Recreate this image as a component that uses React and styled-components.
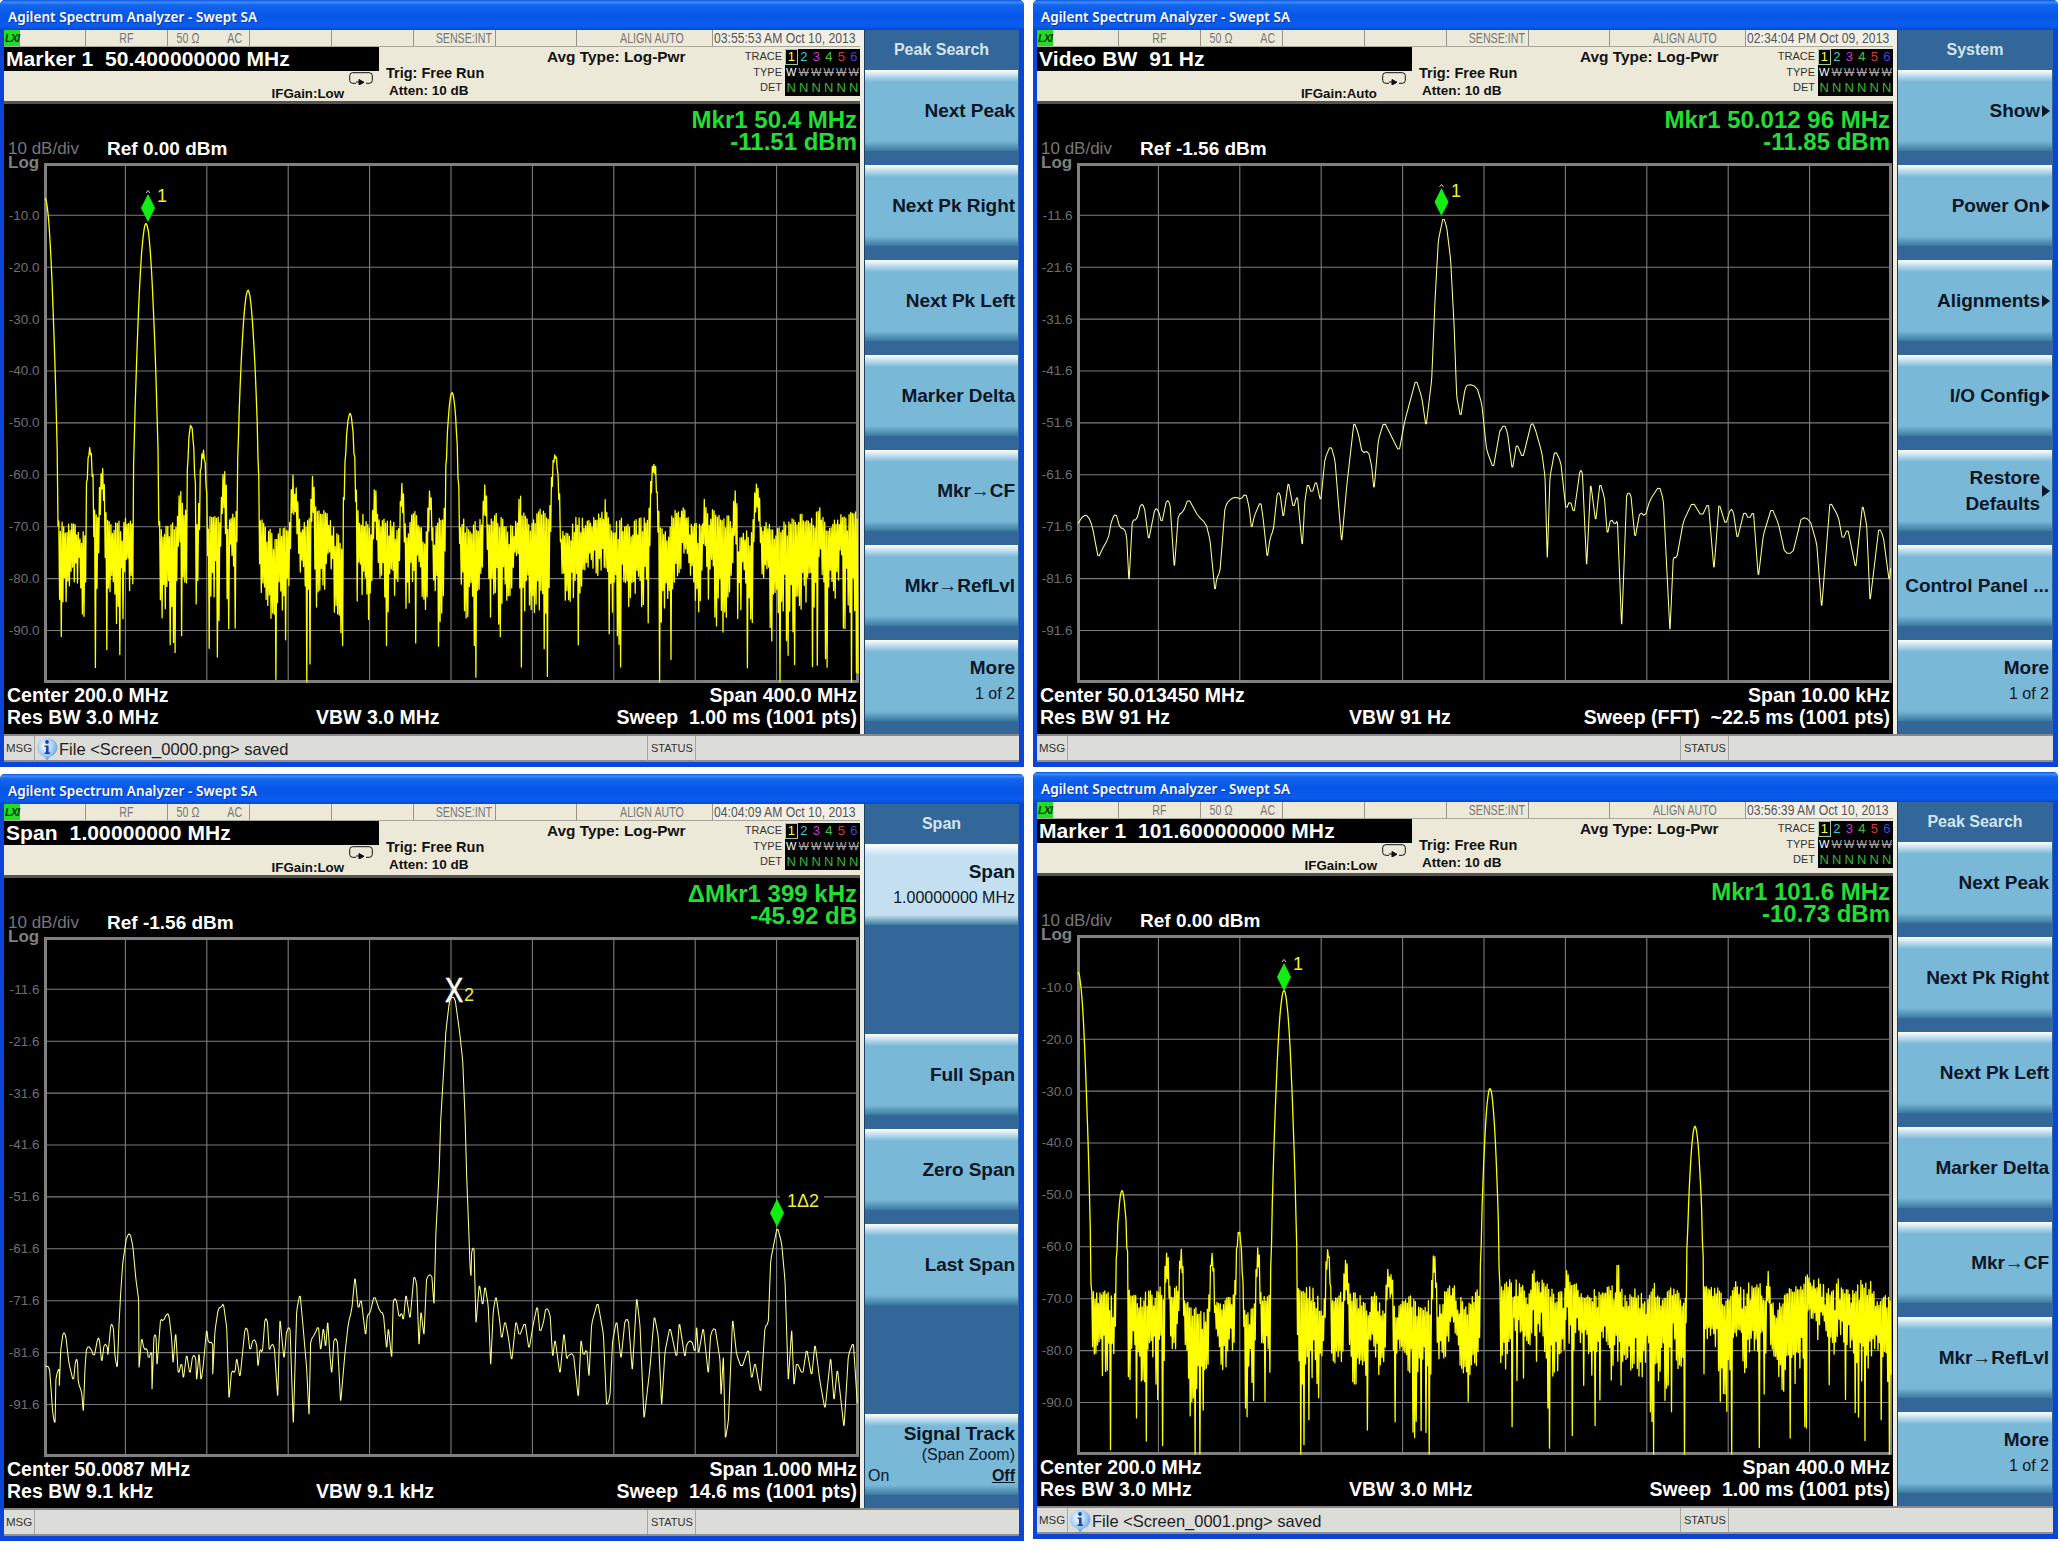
import React from "react";
import styled, { createGlobalStyle } from "styled-components";

const SANS = `"Liberation Sans", Arial, sans-serif`;

const Global = createGlobalStyle`
  html, body { margin: 0; padding: 0; background: #fff; }
  body { font-family: ${SANS}; }
`;

/* ---------- page ---------- */
const Page = styled.div`
  display: grid;
  grid-template-columns: 1024px 1025px;
  column-gap: 9px;
  row-gap: 7px;
  width: 2060px;
  height: 1550px;
  overflow: hidden;
  align-content: start;
  background: #fff;
`;
const Window = styled.section`
  height: 767px;
  margin-top: ${(p) => p.$drop || 0}px;
  background: #0a45d8;
  border-radius: 5px 5px 0 0;
  display: flex;
  flex-direction: column;
  overflow: hidden;
`;
const TitleBar = styled.header`
  height: 30px;
  flex: none;
  box-sizing: border-box;
  display: flex;
  align-items: center;
  padding: 4px 0 0 8px;
  background: linear-gradient(#0a52e0 0, #3d8cf6 2px, #1366ee 5px, #0555e6 16px, #0a5cf0 26px, #0746cc 30px);
  color: #fff;
  font-family: "Noto Sans", sans-serif;
  font-size: 13.5px;
  font-weight: 600;
  letter-spacing: 0.07px;
  text-shadow: 1px 1px 0 #0a3aa8;
`;
const Body = styled.div`
  height: 704px;
  flex: none;
  margin: 0 5px 0 4px;
  display: flex;
`;
const Main = styled.div`
  width: 856px;
  flex: none;
  border-right: 4px solid #f0eee2;
  display: flex;
  flex-direction: column;
`;

/* ---------- settings strip ---------- */
const Strip = styled.div`
  height: 17px;
  flex: none;
  display: grid;
  grid-template-columns: 82px 82px 82px 82px 82px 82px 81px 136px 1fr;
  background: #ece9d8;
  border-bottom: 1px solid #aaa89a;
  box-sizing: border-box;
  color: #777;
  font-size: 14px;
  line-height: 16px;
`;
const StripCell = styled.div`
  border-right: 1px solid #97958a;
  display: flex;
  align-items: center;
  justify-content: ${(p) => p.$align || "center"};
  gap: 22px;
  padding: 0 ${(p) => p.$inset || 0}px 0 0;
  overflow: visible;
  white-space: nowrap;
  &:last-child { border-right: none; background: #f2f0e6; justify-content: flex-start; padding-left: 1px; color: #555; }
`;
const Condensed = styled.span`
  display: inline-block;
  transform: scaleX(${(p) => p.$scale || 0.76});
  transform-origin: ${(p) => p.$origin || "center"};
`;
const LxiBadge = styled.span`
  align-self: stretch;
  width: 16px;
  margin-right: auto;
  background: #22dd22;
  color: #0a3a0a;
  font-size: 11px;
  font-weight: 700;
  font-style: italic;
  letter-spacing: -1px;
  text-align: center;
`;

/* ---------- header ---------- */
const Header = styled.div`
  height: 57px;
  flex: none;
  box-sizing: border-box;
  display: flex;
  background: #ece9d8;
  border-bottom: 3px solid #55544e;
`;
const ReadoutBlock = styled.div`
  width: 375px;
  flex: none;
  display: flex;
  flex-direction: column;
`;
const Readout = styled.div`
  height: 24px;
  flex: none;
  padding-left: 2px;
  background: #000;
  color: #fff;
  font-size: 21px;
  font-weight: 700;
  line-height: 24px;
  letter-spacing: 0.1px;
  white-space: pre;
`;
const GainRow = styled.div`
  display: flex;
  justify-content: flex-end;
  gap: 5px;
  padding: 1px 6px 0 0;
`;
const GainText = styled.span`
  margin-top: 14px;
  font-size: 13.3px;
  font-weight: 700;
  line-height: 16px;
  color: #111;
`;
const TrigBlock = styled.div`
  width: 168px;
  flex: none;
  box-sizing: border-box;
  padding: 17px 0 0 7px;
  font-size: 14.5px;
  font-weight: 700;
  line-height: 18px;
  color: #111;
`;
const AttenLine = styled.div`
  padding-left: 3px;
  font-size: 13.5px;
`;
const AvgBlock = styled.div`
  padding-top: 1px;
  font-size: 15.4px;
  font-weight: 700;
  line-height: 18px;
  color: #111;
  white-space: nowrap;
`;
const TraceBlock = styled.div`
  margin-left: auto;
  display: flex;
  gap: 3px;
  padding-top: 2px;
`;
const TraceLabels = styled.div`
  display: flex;
  flex-direction: column;
  align-items: flex-end;
  font-size: 11px;
  line-height: 15.5px;
  color: #333;
`;
const TraceBox = styled.div`
  width: 75px;
  height: 47px;
  background: #000;
  display: grid;
  grid-template-columns: repeat(6, 1fr);
  grid-auto-rows: 15.6px;
  font-size: 13px;
  line-height: 15.6px;
  text-align: center;
`;
const TraceNum = styled.span`
  color: ${(p) => p.$color};
  ${(p) => p.$active && "outline: 1px solid #9c9; outline-offset: -1px; color: #ff5;"}
`;
const TraceType = styled.span`
  color: ${(p) => (p.$active ? "#fff" : "#aaa")};
  font-size: 11px;
  text-decoration: ${(p) => (p.$active ? "none" : "line-through")};
`;
const TraceDet = styled.span`
  color: #33bb33;
`;

/* ---------- display ---------- */
const Display = styled.div`
  flex: 1;
  background: #000;
  display: flex;
  flex-direction: column;
  color: #fff;
`;
const DisplayTop = styled.div`
  height: 59px;
  flex: none;
  display: grid;
  grid-template-columns: 103px 1fr auto;
  align-items: start;
  padding-right: 3px;
`;
const ScaleText = styled.div`
  padding: 35px 0 0 4px;
  color: #777;
  font-size: 17px;
  line-height: 20px;
  white-space: nowrap;
`;
const RefText = styled.div`
  padding-top: 34px;
  font-size: 19px;
  font-weight: 700;
  line-height: 22px;
  white-space: pre;
`;
const MarkerText = styled.div`
  padding-top: 5px;
  text-align: right;
  color: #22dd33;
  font-size: 24px;
  font-weight: 700;
  line-height: 22px;
`;
const Chart = styled.svg`
  display: block;
  flex: none;
  width: 856px;
  height: 521px;
  overflow: visible;
`;
const AxisLabel = styled.text`
  fill: #6f6f6f;
  font-family: ${SANS};
  font-size: 13.5px;
  text-anchor: end;
`;
const LogLabel = styled.text`
  fill: #808080;
  font-family: ${SANS};
  font-size: 17px;
  font-weight: 700;
`;
const MarkerNum = styled.text`
  fill: #eeee33;
  font-family: ${SANS};
  font-size: 18px;
`;
const DeltaX = styled.text`
  fill: #fff;
  font-family: ${SANS};
  font-size: 36px;
  stroke: #fff;
  stroke-width: 0.6px;
`;
const Foot = styled.div`
  flex: 1;
  display: grid;
  grid-template-columns: 309px 1fr auto;
  grid-auto-rows: 22px;
  padding: 0 3px;
  font-size: 19.5px;
  font-weight: 700;
  line-height: 22px;
  white-space: pre;
`;
const FootRight = styled.div`
  text-align: right;
`;

/* ---------- soft keys ---------- */
const Keys = styled.aside`
  flex: 1;
  display: flex;
  flex-direction: column;
  gap: 14px;
  background: #336699;
  padding-right: 1px;
  border-left: 1px solid #1f3f5f;
`;
const KeysTitle = styled.div`
  height: 40px;
  margin-bottom: -14px;
  flex: none;
  text-align: center;
  color: #d3e6f0;
  font-size: 16px;
  font-weight: 700;
  line-height: 40px;
`;
const Key = styled.div`
  height: 81px;
  flex: none;
  box-sizing: border-box;
  display: flex;
  align-items: center;
  justify-content: flex-end;
  gap: 2px;
  padding-right: 3px;
  text-align: right;
  color: #0b1626;
  background: linear-gradient(
    #ffffff 0,
    ${(p) => (p.$selected ? "#c4e0f0" : "#7ab8d8")} 12px,
    ${(p) => (p.$selected ? "#c4e0f0" : "#7ab8d8")} calc(100% - 10px),
    #3a7aa0 100%
  );
`;
const KeyEmpty = styled.div`
  height: 81px;
  flex: none;
`;
const KeyText = styled.div`
  flex: 1;
  min-width: 0;
`;
const KeyLabel = styled.div`
  font-size: 19px;
  font-weight: 700;
  line-height: ${(p) => (p.$tight ? 21 : 26)}px;
  white-space: pre-line;
  letter-spacing: -0.05px;
`;
const KeySub = styled.div`
  font-size: 16px;
  line-height: ${(p) => (p.$tight ? 21 : 26)}px;
  white-space: nowrap;
`;
const KeyToggle = styled.div`
  display: flex;
  justify-content: space-between;
  padding-left: 3px;
  font-size: 16px;
  line-height: 21px;
`;
const KeyOff = styled.span`
  text-decoration: underline;
  font-weight: 700;
`;
const Arrow = styled.span`
  flex: none;
  width: 0;
  height: 0;
  margin-right: -1px;
  border-top: 6px solid transparent;
  border-bottom: 6px solid transparent;
  border-left: 8px solid #0b1626;
`;

/* ---------- status bar ---------- */
const StatusBar = styled.footer`
  height: 28px;
  flex: none;
  margin: 0 5px 0 4px;
  box-sizing: border-box;
  display: grid;
  grid-template-columns: 31px 613px 48px 1fr;
  background: #dcdcd8;
  border-top: 2px solid #888;
  border-bottom: 2px solid #8f8f8f;
  color: #222;
  line-height: 24px;
`;
const BarTag = styled.div`
  font-size: 11.5px;
  padding-left: 2px;
  border-right: 1px solid #a5a5a0;
  color: #333;
`;
const BarMsg = styled.div`
  display: flex;
  align-items: center;
  gap: 1px;
  padding: 1px 0 0 1px;
  font-size: 16.5px;
  border-right: 1px solid #a5a5a0;
  white-space: nowrap;
`;
const StatusTag = styled(BarTag)`
  padding-left: 3px;
  font-size: 11px;
`;

/* ---------- data ---------- */
const rngFrom = (seed) => () => {
  seed |= 0;
  seed = (seed + 0x6d2b79f5) | 0;
  let t = Math.imul(seed ^ (seed >>> 15), 1 | seed);
  t = (t + Math.imul(t ^ (t >>> 7), 61 | t)) ^ t;
  return ((t ^ (t >>> 14)) >>> 0) / 4294967296;
};

/* sweep of 1001 points: every other point sits at the noise crest, the others deep in it,
   so the band reads as a solid block with jagged edges, thinning out on strong tones */
const noiseTrace = (seed, tones, floorAt, depth) => {
  const r = rngFrom(seed);
  const grid = Array.from({ length: 240 }, () => r());
  const smooth = (x) => {
    const g = x / 9;
    const i = Math.floor(g);
    const f = g - i;
    return grid[i % 240] * (1 - f) + grid[(i + 1) % 240] * f;
  };
  const pts = [];
  for (let i = 0; i <= 1000; i++) {
    const x = i * 0.813;
    let t = 1e4;
    for (const [px, py, w = 7.3] of tones) {
      const d = (x - px) / w;
      t = Math.min(t, py + 100 * d * d);
    }
    const top = floorAt(x) + (smooth(x) - 0.5) * 30;
    const reach = depth * (0.6 + 0.85 * smooth(x * 1.7 + 500));
    let d;
    if (i % 2) {
      d = 24 * r() * r();
    } else {
      d = reach * (0.55 + 0.45 * r());
      if (r() < 0.16) d += 25 + r() * 75;
    }
    let y;
    if (t < top) {
      const s = (top - t) / 46;
      y = t + d * Math.exp(-s * s) + r() * 0.8;
    } else {
      y = top + d;
    }
    pts.push(`${x.toFixed(1)},${Math.min(y, 518).toFixed(1)}`);
  }
  return pts.join(" ");
};

/* soft corners on the hand-read traces: only the last few pixels of each corner are cut */
const rounded = (list) => {
  const out = [list[0]];
  for (let i = 1; i < list.length - 1; i++) {
    const [px, py] = list[i - 1];
    const [x, y] = list[i];
    const [nx, ny] = list[i + 1];
    const la = Math.hypot(px - x, py - y) || 1;
    const lb = Math.hypot(nx - x, ny - y) || 1;
    const ca = Math.min(la * 0.3, 3) / la;
    const cb = Math.min(lb * 0.3, 3) / lb;
    out.push([x + (px - x) * ca, y + (py - y) * ca]);
    out.push([x + (nx - x) * cb, y + (ny - y) * cb]);
  }
  out.push(list[list.length - 1]);
  return out;
};
const zoomed = (list, ox, oy) => list.map(([x, y]) => [ox + x / 3, oy + y / 3]);
const toPoints = (list) => rounded(list).map(([x, y]) => `${x.toFixed(1)},${y.toFixed(1)}`).join(" ");

const TONES_A = [
  [0, 34, 7.7], [101, 59, 8], [203, 126, 8], [45, 283, 6], [57, 303, 6], [146, 260, 6], [158, 284, 6], [179, 306, 6], [135, 316, 5],
  [305, 249], [407, 228], [510, 289], [609, 296], [712, 317], [357, 319, 5], [248, 311, 5], [268, 309, 5],
  [251, 316, 5], [330, 322, 5], [440, 320, 5], [385, 325, 5], [475, 330, 5], [560, 335, 5], [660, 332, 5], [690, 325, 5],
];
const TONES_D = [
  [0, 36, 7.7], [206, 54, 8], [412, 152], [617, 190], [44, 254], [89, 312, 5], [103, 312, 5], [134, 316, 5], [161, 294, 6],
  [180, 311, 5], [250, 307, 5], [268, 316, 5], [313, 332, 5], [356, 317, 5], [455, 324, 5], [489, 332, 5], [310, 330, 5],
  [540, 325, 5], [690, 332, 5], [760, 335, 5],
];

const W2A = [[145,970],[160,945],[175,948],[187,980],[205,1075],[215,1050],[235,1015],[245,960],[257,938],[270,985],[283,985],[290,1010],[297,1145],[307,960],[320,960],[333,910],[343,920],[356,1022],[375,925],[385,930],[395,970],[410,898],[420,910],[433,1105],[445,945],[460,935],[475,895],[505,950],[528,970],[540,1020],[555,1175],[560,1135],[570,1115],[585,920],[600,897],[620,890],[632,900],[647,878],[657,920],[665,988],[672,950],[692,903],[700,960],[712,1075],[720,1015],[730,990],[742,878],[750,880],[760,955],[775,845],[790,925],[802,885],[817,1040],[825,900],[833,848],[846,882],[858,840],[872,905],[885,775],[902,735],[915,780],[935,1028],[950,860],[972,665],[985,700],[997,760],[1015,752],[1025,800],[1032,870],[1045,720],[1062,665],[1085,710],[1107,755],[1125,660],[1158,538],[1175,590],[1188,680],[1205,540],[1215,300],[1225,120],[1240,50],[1250,80],[1262,180],[1272,370],[1280,590],[1292,652],[1305,565],[1315,552],[1340,560],[1355,610],[1370,750],[1390,805],[1410,690]];
const W2B = [[0,275],[12,252],[22,275],[37,390],[50,310],[68,355],[95,245],[105,265],[125,335],[135,410],[142,660],[150,410],[165,330],[182,365],[198,510],[210,480],[222,520],[240,390],[247,395],[260,680],[272,430],[287,545],[300,428],[313,470],[322,585],[332,535],[345,555],[352,540],[365,860],[380,460],[392,460],[405,595],[420,515],[435,530],[450,480],[478,437],[490,480],[510,875],[520,650],[530,655],[550,545],[578,485],[605,530],[625,488],[642,690],[657,490],[677,555],[692,505],[700,515],[712,598],[733,512],[747,540],[760,512],[775,712],[790,585],[815,503],[835,550],[855,640],[878,640],[905,530],[930,540],[950,610],[965,805],[990,485],[1015,530],[1028,600],[1043,565],[1067,685],[1088,493],[1100,555],[1110,785],[1137,562],[1150,590],[1168,725],[1172,685]];
const W3A = [[45,708],[58,710],[65,800],[68,850],[75,885],[78,740],[88,710],[88,775],[92,660],[100,605],[107,615],[117,700],[130,755],[137,690],[142,688],[145,760],[155,785],[160,850],[165,715],[170,650],[182,652],[192,683],[203,625],[208,625],[215,700],[223,640],[233,650],[233,682],[243,580],[250,590],[255,680],[262,718],[266,605],[272,490],[278,400],[290,320],[300,308],[308,345],[318,450],[326,510],[327,720],[335,620],[342,660],[352,655],[355,690],[365,660],[366,785],[372,615],[378,615],[381,710],[392,565],[400,575],[410,550],[417,555],[425,625],[429,705],[437,605],[445,735],[455,695],[460,750],[470,670],[480,735],[488,675],[497,680],[500,755],[507,665],[513,755],[520,705],[530,595],[535,640],[548,635],[548,740],[555,600],[565,535],[575,530],[580,520],[590,590],[597,810],[605,720],[615,730],[620,680],[630,745],[645,595],[652,595],[660,665],[670,625],[680,640],[684,715],[690,655],[697,670],[705,565],[712,570],[718,665],[725,640],[733,650],[743,805],[750,565],[762,690],[770,600],[780,590],[790,885],[800,540],[810,490],[820,600],[830,715],[837,860],[842,630],[855,612],[865,585],[872,665],[880,590],[887,655],[893,570],[900,680],[905,735],[912,625],[922,630],[932,820],[945,670],[955,580],[965,540],[975,438],[985,540],[993,505],[1007,620],[1012,555],[1020,550],[1033,495],[1050,545],[1060,550],[1070,660],[1075,590],[1085,688],[1090,510],[1098,505],[1108,565],[1115,545],[1120,575],[1128,490],[1140,570],[1152,435],[1160,460],[1167,650],[1173,540],[1182,620],[1190,440],[1205,432],[1212,528],[1218,300],[1228,110]];
const W3B = [[62,480],[70,350],[78,210],[88,125],[95,110],[105,115],[118,210],[128,300],[135,470],[140,650],[147,830],[150,920],[153,955],[155,870],[162,862],[168,1095],[178,970],[188,1040],[195,975],[205,1040],[212,1220],[220,1050],[228,1005],[238,1075],[245,1140],[255,1080],[265,1130],[275,1205],[288,1080],[298,1130],[315,1085],[327,1170],[340,1090],[352,1035],[360,1120],[370,1090],[378,1040],[390,1060],[398,1195],[405,1135],[420,1245],[432,1115],[440,1200],[445,1185],[460,1180],[475,1315],[483,1135],[490,1190],[500,1165],[507,1255],[515,1090],[533,1025],[550,1120],[560,1340],[570,1310],[578,1140],[590,1080],[603,1200],[615,1080],[625,1078],[637,1235],[650,1010],[660,1095],[672,1380],[680,1310],[690,1225],[703,1065],[715,1130],[725,1340],[735,1175],[750,1100],[770,1195],[778,1085],[795,1195],[800,1150],[815,1140],[825,1180],[830,1095],[835,1185],[850,1100],[865,1245],[872,1120],[885,1100],[900,1200],[903,1310],[910,1185],[916,1440],[925,1385],[938,1075],[950,1185],[965,1225],[985,1165],[995,1260],[1005,1205],[1022,1300],[1035,1100],[1045,1090],[1052,900],[1072,800],[1085,850],[1095,960],[1105,1265],[1115,1105],[1122,1280],[1130,1205],[1148,1245],[1160,1165],[1175,1250],[1185,1150],[1200,1265],[1215,1350],[1232,1190],[1242,1325],[1252,1225],[1272,1405],[1285,1185],[1300,1145],[1312,1330]];

const labels = (first) => Array.from({ length: 9 }, (_, i) => (first - i * 10).toFixed(1));

const PEAK_KEYS = [
  { label: "Next Peak" },
  { label: "Next Pk Right" },
  { label: "Next Pk Left" },
  { label: "Marker Delta" },
  { label: "Mkr→CF" },
  { label: "Mkr→RefLvl" },
  { label: "More", sub: "1 of 2" },
];

const WINDOWS = [
  {
    date: "03:55:53 AM Oct 10, 2013",
    readout: "Marker 1  50.400000000 MHz",
    gain: "IFGain:Low",
    marker: ["Mkr1 50.4 MHz", "-11.51 dBm"],
    ref: "Ref 0.00 dBm",
    axis: labels(-10),
    center: "Center 200.0 MHz",
    res: "Res BW 3.0 MHz",
    vbw: "VBW 3.0 MHz",
    span: "Span 400.0 MHz",
    sweep: "Sweep  1.00 ms (1001 pts)",
    msg: "File <Screen_0000.png> saved",
    title: "Peak Search",
    keys: PEAK_KEYS,
    trace: noiseTrace(11, TONES_A, () => 355, 82),
    bold: true,
    diamond: { x: 103, y: 44, num: "1", nx: 112, ny: 38 },
  },
  {
    date: "02:34:04 PM Oct 09, 2013",
    readout: "Video BW  91 Hz",
    gain: "IFGain:Auto",
    marker: ["Mkr1 50.012 96 MHz", "-11.85 dBm"],
    ref: "Ref -1.56 dBm",
    axis: labels(-11.6),
    center: "Center 50.013450 MHz",
    res: "Res BW 91 Hz",
    vbw: "VBW 91 Hz",
    span: "Span 10.00 kHz",
    sweep: "Sweep (FFT)  ~22.5 ms (1001 pts)",
    title: "System",
    keys: [
      { label: "Show", arrow: true },
      { label: "Power On", arrow: true },
      { label: "Alignments", arrow: true },
      { label: "I/O Config", arrow: true },
      { label: "Restore\nDefaults", arrow: true },
      { label: "Control Panel ..." },
      { label: "More", sub: "1 of 2" },
    ],
    trace: toPoints([...zoomed(W2A, -48, 36), ...zoomed(W2B, 422, 176)]),
    diamond: { x: 363.5, y: 38, num: "1", nx: 373, ny: 33 },
  },
  {
    date: "04:04:09 AM Oct 10, 2013",
    readout: "Span  1.00000000 MHz",
    gain: "IFGain:Low",
    marker: ["ΔMkr1 399 kHz", "-45.92 dB"],
    ref: "Ref -1.56 dBm",
    axis: labels(-11.6),
    center: "Center 50.0087 MHz",
    res: "Res BW 9.1 kHz",
    vbw: "VBW 9.1 kHz",
    span: "Span 1.000 MHz",
    sweep: "Sweep  14.6 ms (1001 pts)",
    title: "Span",
    keys: [
      { label: "Span", sub: "1.00000000 MHz", selected: true },
      null,
      { label: "Full Span" },
      { label: "Zero Span" },
      { label: "Last Span" },
      null,
      { label: "Signal Track", sub: "(Span Zoom)", toggle: true },
    ],
    trace: toPoints([...zoomed(W3A, -15, 192), ...zoomed(W3B, 375, 22)]),
    delta: true,
    diamond: { x: 732, y: 275, num: "1Δ2", nx: 742, ny: 269 },
  },
  {
    date: "03:56:39 AM Oct 10, 2013",
    readout: "Marker 1  101.600000000 MHz",
    gain: "IFGain:Low",
    marker: ["Mkr1 101.6 MHz", "-10.73 dBm"],
    ref: "Ref 0.00 dBm",
    axis: labels(-10),
    center: "Center 200.0 MHz",
    res: "Res BW 3.0 MHz",
    vbw: "VBW 3.0 MHz",
    span: "Span 400.0 MHz",
    sweep: "Sweep  1.00 ms (1001 pts)",
    msg: "File <Screen_0001.png> saved",
    title: "Peak Search",
    keys: PEAK_KEYS,
    trace: noiseTrace(29, TONES_D, (x) => (x > 420 ? 352 : 362), 74),
    bold: true,
    drop: -2,
    diamond: { x: 206, y: 41, num: "1", nx: 215, ny: 34 },
  },
];

const TRACE_COLORS = ["#ff5", "#44c8c8", "#c83cc8", "#44c844", "#d83838", "#4444d8"];

/* ---------- parts ---------- */
const SweepIcon = () => (
  <svg width="24" height="13" viewBox="0 0 24 13">
    <rect x="0.7" y="0.7" width="22.6" height="10.6" rx="3" fill="none" stroke="#111" strokeWidth="1" />
    <rect x="7" y="9" width="10" height="4" fill="#ece9d8" />
    <path d="M7 10 L12 10 M10 7.5 L15 10.3 L10 13 Z" stroke="#111" fill="#111" strokeWidth="1" />
  </svg>
);

const InfoIcon = () => (
  <svg width="22" height="24" viewBox="0 0 22 24">
    <defs>
      <radialGradient id="infoGrad" cx="0.4" cy="0.35" r="0.8">
        <stop offset="0" stopColor="#ffffff" />
        <stop offset="0.6" stopColor="#8fc0f0" />
        <stop offset="1" stopColor="#2f6fc8" />
      </radialGradient>
    </defs>
    <path d="M11 1 A10 9.5 0 0 1 14.5 19.5 L11 23.5 L8 19.5 A10 9.5 0 0 1 11 1 Z" fill="url(#infoGrad)" />
    <circle cx="11" cy="5" r="1.9" fill="#1a3fb0" />
    <path d="M8.5 8.5 H12.6 V15.5 H14 V17 H8.5 V15.5 H10 V10 H8.5 Z" fill="#1a3fb0" />
  </svg>
);

const Spectrum = ({ w }) => (
  <Chart viewBox="0 0 856 521">
    <g transform="translate(40 0.4)">
      {Array.from({ length: 9 }, (_, i) => (
        <line key={i} x1={(i + 1) * 81.4} x2={(i + 1) * 81.4} y1="0" y2="519" stroke="#7c7c7c" strokeWidth="1.1" />
      ))}
      {Array.from({ length: 9 }, (_, i) => (
        <line key={i} x1="0" x2="814" y1={(i + 1) * 51.9} y2={(i + 1) * 51.9} stroke="#7c7c7c" strokeWidth="1.1" />
      ))}
      <path d="M1.5 518 V1 H813.5 V518 H0" fill="none" stroke="#808080" strokeWidth="3" />
      <LogLabel x="-36" y="5">Log</LogLabel>
      {w.axis.map((a, i) => (
        <AxisLabel key={a} x="-4.5" y={(i + 1) * 51.9 + 4.5}>{a}</AxisLabel>
      ))}
    </g>
    <g transform="translate(41 1)">
      {w.delta && <rect x="735" y="258" width="44" height="18" fill="#000" />}
      <polyline
        points={w.trace}
        fill="none"
        stroke={w.bold ? "#ffff00" : "#ffff88"}
        strokeWidth={w.bold ? 1.3 : 1.05}
        strokeLinejoin="round"
      />
      <polygon
        points={`${w.diamond.x - 7},${w.diamond.y} ${w.diamond.x},${w.diamond.y - 14} ${w.diamond.x + 7},${w.diamond.y} ${w.diamond.x},${w.diamond.y + 14}`}
        fill="#11ee11"
      />
      {!w.delta && (
        <path
          d={`M${w.diamond.x - 2} ${w.diamond.y - 15} L${w.diamond.x} ${w.diamond.y - 17.5} L${w.diamond.x + 2} ${w.diamond.y - 15}`}
          fill="none"
          stroke="#fff"
          strokeWidth="0.8"
        />
      )}
      <MarkerNum x={w.diamond.nx} y={w.diamond.ny}>{w.diamond.num}</MarkerNum>
      {w.delta && (
        <>
          <DeltaX transform="translate(400 64) scale(0.76 1)" x="0" y="0">X</DeltaX>
          <MarkerNum x="419" y="63">2</MarkerNum>
        </>
      )}
    </g>
  </Chart>
);

const SoftKey = ({ k }) => {
  if (!k) return <KeyEmpty />;
  return (
    <Key $selected={k.selected}>
      <KeyText>
        <KeyLabel $tight={k.toggle}>{k.label}</KeyLabel>
        {k.sub && <KeySub $tight={k.toggle}>{k.sub}</KeySub>}
        {k.toggle && (
          <KeyToggle>
            <span>On</span>
            <KeyOff>Off</KeyOff>
          </KeyToggle>
        )}
      </KeyText>
      {k.arrow && <Arrow />}
    </Key>
  );
};

const Analyzer = ({ w }) => (
  <Window $drop={w.drop}>
    <TitleBar>Agilent Spectrum Analyzer - Swept SA</TitleBar>
    <Body>
      <Main>
        <Strip>
          <StripCell><LxiBadge>LXI</LxiBadge></StripCell>
          <StripCell><Condensed>RF</Condensed></StripCell>
          <StripCell><Condensed>50 Ω</Condensed><Condensed>AC</Condensed></StripCell>
          <StripCell />
          <StripCell />
          <StripCell $align="flex-end" $inset={3}><Condensed $origin="right">SENSE:INT</Condensed></StripCell>
          <StripCell />
          <StripCell $align="flex-end" $inset={28}><Condensed $origin="right">ALIGN AUTO</Condensed></StripCell>
          <StripCell><Condensed $origin="left" $scale={0.87}>{w.date}</Condensed></StripCell>
        </Strip>
        <Header>
          <ReadoutBlock>
            <Readout>{w.readout}</Readout>
            <GainRow>
              <GainText>{w.gain}</GainText>
              <SweepIcon />
            </GainRow>
          </ReadoutBlock>
          <TrigBlock>
            <div>Trig: Free Run</div>
            <AttenLine>Atten: 10 dB</AttenLine>
          </TrigBlock>
          <AvgBlock>Avg Type: Log-Pwr</AvgBlock>
          <TraceBlock>
            <TraceLabels>
              <span>TRACE</span>
              <span>TYPE</span>
              <span>DET</span>
            </TraceLabels>
            <TraceBox>
              {TRACE_COLORS.map((c, i) => (
                <TraceNum key={c} $color={c} $active={i === 0}>{i + 1}</TraceNum>
              ))}
              {TRACE_COLORS.map((c, i) => (
                <TraceType key={c} $active={i === 0}>W</TraceType>
              ))}
              {TRACE_COLORS.map((c) => (
                <TraceDet key={c}>N</TraceDet>
              ))}
            </TraceBox>
          </TraceBlock>
        </Header>
        <Display>
          <DisplayTop>
            <ScaleText>10 dB/div</ScaleText>
            <RefText>{w.ref}</RefText>
            <MarkerText>
              <div>{w.marker[0]}</div>
              <div>{w.marker[1]}</div>
            </MarkerText>
          </DisplayTop>
          <Spectrum w={w} />
          <Foot>
            <div>{w.center}</div>
            <div />
            <FootRight>{w.span}</FootRight>
            <div>{w.res}</div>
            <div>{w.vbw}</div>
            <FootRight>{w.sweep}</FootRight>
          </Foot>
        </Display>
      </Main>
      <Keys>
        <KeysTitle>{w.title}</KeysTitle>
        {w.keys.map((k, i) => (
          <SoftKey key={i} k={k} />
        ))}
      </Keys>
    </Body>
    <StatusBar>
      <BarTag>MSG</BarTag>
      <BarMsg>
        {w.msg && <InfoIcon />}
        {w.msg}
      </BarMsg>
      <StatusTag>STATUS</StatusTag>
      <div />
    </StatusBar>
  </Window>
);

export default function App() {
  return (
    <Page>
      <Global />
      {WINDOWS.map((w, i) => (
        <Analyzer key={i} w={w} />
      ))}
    </Page>
  );
}
